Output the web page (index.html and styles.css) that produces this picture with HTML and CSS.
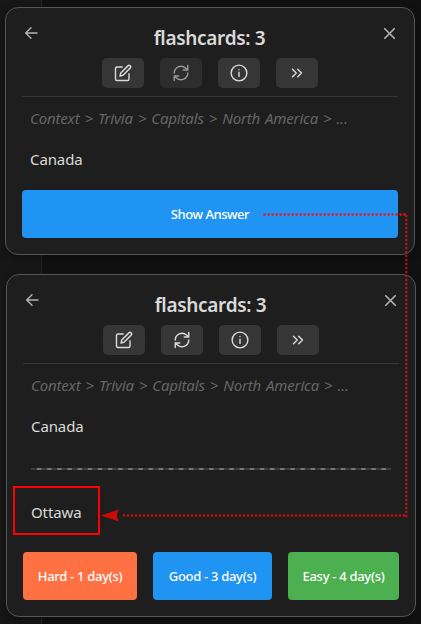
FILE: index.html
```html
<!DOCTYPE html>
<html lang="en">
<head>
<meta charset="utf-8">
<title>Flashcards</title>
<link rel="stylesheet" href="styles.css">
</head>
<body>
<svg class="sprite" width="0" height="0">
  <symbol id="back" viewBox="0 0 24 24"><path d="M21 12H4M12 4l-8 8 8 8"/></symbol>
  <symbol id="close" viewBox="0 0 24 24"><path d="M18 6L6 18M6 6l12 12"/></symbol>
  <symbol id="edit" viewBox="0 0 24 24"><path d="M11 4H4a2 2 0 0 0-2 2v14a2 2 0 0 0 2 2h14a2 2 0 0 0 2-2v-7"/><path d="M18.5 2.5a2.12 2.12 0 0 1 3 3L12 15l-4 1 1-4z"/></symbol>
  <symbol id="refresh" viewBox="0 0 24 24"><path d="M3 2v6h6M21 12A9 9 0 0 0 6 5.3L3 8M21 22v-6h-6M3 12a9 9 0 0 0 15 6.7l3-2.7"/></symbol>
  <symbol id="info" viewBox="0 0 24 24"><circle cx="12" cy="12" r="10.5"/><path d="M12 16.5V11M12 7.5h.01"/></symbol>
  <symbol id="skip" viewBox="0 0 24 24"><path d="M13 17l5-5-5-5M6 17l5-5-5-5"/></symbol>
</svg>
<main class="screen">
  <section class="card">
    <header class="top">
      <svg class="icon nav"><use href="#back"/></svg>
      <h1 class="title">flashcards: 3</h1>
      <svg class="icon nav close"><use href="#close"/></svg>
    </header>
    <div class="tools">
      <button class="tool"><svg class="icon"><use href="#edit"/></svg></button>
      <button class="tool disabled"><svg class="icon"><use href="#refresh" transform="translate(18 0) scale(-1 1)"/></svg></button>
      <button class="tool"><svg class="icon"><use href="#info"/></svg></button>
      <button class="tool"><svg class="icon"><use href="#skip"/></svg></button>
    </div>
    <div class="content">
      <p class="context">Context &gt; Trivia &gt; Capitals &gt; North America &gt; ...</p>
      <p class="text">Canada</p>
    </div>
    <div class="actions"><button class="action show">Show Answer</button></div>
  </section>
  <section class="card answered">
    <header class="top">
      <svg class="icon nav"><use href="#back"/></svg>
      <h1 class="title">flashcards: 3</h1>
      <svg class="icon nav close"><use href="#close"/></svg>
    </header>
    <div class="tools">
      <button class="tool"><svg class="icon"><use href="#edit"/></svg></button>
      <button class="tool"><svg class="icon"><use href="#refresh" transform="translate(18 0) scale(-1 1)"/></svg></button>
      <button class="tool"><svg class="icon"><use href="#info"/></svg></button>
      <button class="tool"><svg class="icon"><use href="#skip"/></svg></button>
    </div>
    <div class="content">
      <p class="context">Context &gt; Trivia &gt; Capitals &gt; North America &gt; ...</p>
      <p class="text">Canada</p>
      <svg class="divider" viewBox="0 0 360 3"><path class="rule" d="M0 2h360"/><path class="dash" d="M6 2h350"/></svg>
      <p class="text answer">Ottawa</p>
    </div>
    <div class="actions">
      <button class="action hard">Hard - 1 day(s)</button>
      <button class="action good">Good - 3 day(s)</button>
      <button class="action easy">Easy - 4 day(s)</button>
    </div>
  </section>
  <svg class="overlay" viewBox="0 0 421 624">
    <rect class="frame" x="14" y="487" width="85" height="47"/>
    <path class="dots bright" d="M264.5 214.5H406"/>
    <path class="dots" d="M406.3 216V517M404 515.5H120"/>
    <path class="head" d="M101 515.5L119 509.5Q115 515.5 119 521.5Z"/>
  </svg>
</main>
</body>
</html>
```
FILE: styles.css
```css
* { box-sizing: border-box; }
body {
  margin: 0;
  background: #111;
  font-family: "Noto Sans", "Open Sans", sans-serif;
  color: #dadada;
}
.sprite { position: absolute; }
.screen {
  position: relative;
  width: 421px;
  height: 624px;
  padding: 7px 5px;
  overflow: hidden;
  background: linear-gradient(90deg, #171717 41px, #242424 41px, #242424 42px, #111 42px);
}
.card {
  display: flex;
  flex-direction: column;
  width: 410px;
  height: 248px;
  padding: 16px;
  border: 1px solid #555;
  border-radius: 13px;
  background: #1e1e1e;
  box-shadow: 0 3px 8px rgba(0, 0, 0, .35);
}
.answered { height: 343px; margin: 19px 0 0 1px; }
.top { display: flex; justify-content: space-between; height: 34px; }
.title {
  margin: -1px 0 0;
  font-size: 19px;
  line-height: 30px;
  font-weight: 650;
  letter-spacing: -.32px;
  white-space: nowrap;
}
.icon {
  display: block;
  width: 18px;
  height: 18px;
  overflow: visible;
  fill: none;
  stroke: #dadada;
  stroke-width: 1.9;
  stroke-linecap: round;
  stroke-linejoin: round;
}
.nav { width: 16px; height: 16px; margin: 1px 0 0 1px; stroke: #b3b3b3; stroke-width: 2.1; }
.close { width: 19px; height: 19px; margin: 0 -1px 0 0; }
.tools {
  display: flex;
  justify-content: center;
  gap: 16px;
  height: 39px;
  border-bottom: 1px solid #363636;
}
.tool {
  display: flex;
  align-items: center;
  justify-content: center;
  width: 42px;
  height: 30px;
  padding: 0;
  border: 0;
  border-radius: 5px;
  background: #363636;
}
.disabled { background: #2d2d2d; }
.disabled .icon { stroke: #999; }
.content { padding: 9px 8px 0; }
.context, .text { margin: 0; white-space: nowrap; font-size: 15px; line-height: 24px; }
.context { color: #666; font-style: italic; letter-spacing: -.17px; word-spacing: 1.3px; }
.text { margin-top: 17px; letter-spacing: -.1px; }
.divider { display: block; width: 360px; height: 3px; margin-top: 29px; }
.rule { stroke: #3c3c3c; stroke-width: 2; }
.dash { stroke: #777; stroke-width: 2; stroke-dasharray: 4.5 5.63; }
.answer { margin-top: 30px; }
.actions { display: flex; gap: 16px; margin-top: auto; }
.action {
  height: 48px;
  padding: 0;
  border: 0;
  border-radius: 4px;
  color: #fff;
  font: 500 13px/18px "Noto Sans", sans-serif;
  letter-spacing: -.45px;
  white-space: nowrap;
}
.show { flex: 1; background: #2094f3; }
.hard, .good, .easy { letter-spacing: -.3px; }
.hard { width: 114px; background: #ff7043; }
.good { width: 119px; background: #2094f3; }
.easy { width: 111px; background: #4caf50; }
.overlay {
  position: absolute;
  inset: 0;
  width: 421px;
  height: 624px;
  fill: none;
  pointer-events: none;
}
.frame { stroke: #f00; stroke-width: 2; }
.dots { stroke: #cf0c0c; stroke-width: 2.4; stroke-linecap: round; stroke-dasharray: .1 3.9; }
.bright { stroke: #f3101c; }
.head { fill: #cf0808; }
```
